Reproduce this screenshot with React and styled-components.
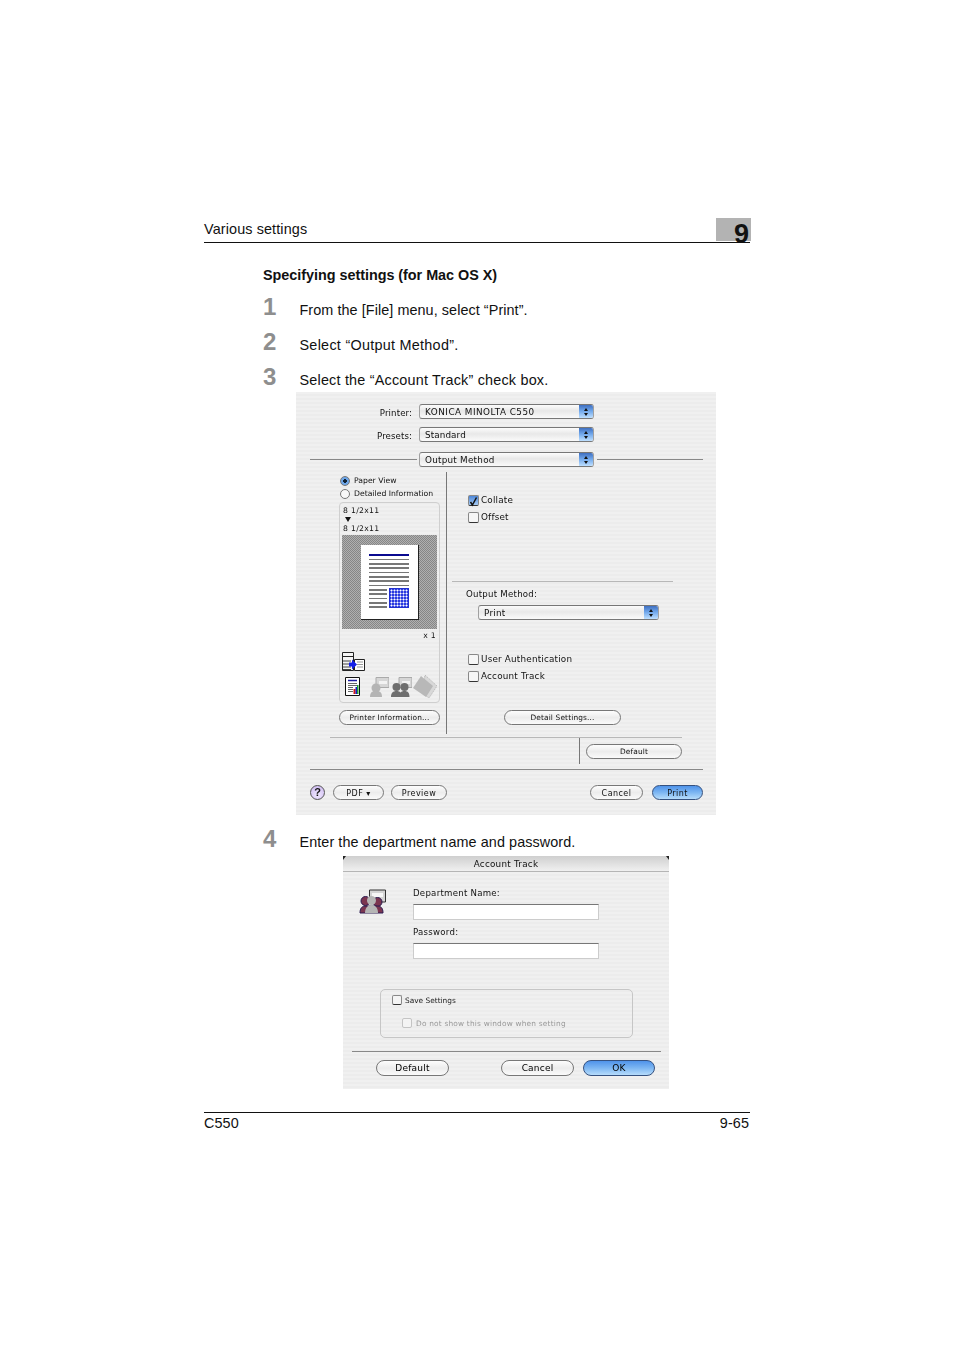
import styled, { createGlobalStyle } from "styled-components";

const GlobalStyle = createGlobalStyle`
    html, body {
        margin: 0;
        padding: 0;
        background: #fff;
    }
    body {
        font-family: "Liberation Sans", Arial, sans-serif;
        color: #111;
    }
`;

const Page = styled.div`
    width: 954px;
    height: 1350px;
    padding: 218px 204px 0;
    box-sizing: border-box;
    overflow: hidden;
`;
const Sheet = styled.div`
    width: 546px;
`;
const Header = styled.div`
    height: 24px;
    display: flex;
    justify-content: space-between;
    border-bottom: 1px solid #111;
`;
const HeaderTitle = styled.span`
    font-size: 14.4px;
    line-height: 22px;
    letter-spacing: 0.12px;
`;
const ChapterTab = styled.div`
    width: 35px;
    height: 23px;
    margin-right: -1px;
    background: #b3b3b3;
    text-align: right;
    font-size: 27px;
    font-weight: 700;
    line-height: 33px;
    padding-right: 2px;
    box-sizing: border-box;
`;
const Heading = styled.h2`
    margin: 22px 0 15px 59px;
    font-size: 14.4px;
    line-height: 20px;
    font-weight: 700;
    letter-spacing: -0.03px;
`;
const Step = styled.div`
    display: flex;
    height: 20px;
    margin: ${(p) => p.$top || 15}px 0 0 59px;
    font-size: 14.4px;
    line-height: 20px;
    letter-spacing: ${(p) => p.$track || 0}px;
`;
const StepNumber = styled.span`
    width: 36.5px;
    margin-top: -3px;
    font-size: 24px;
    font-weight: 700;
    color: #8e8e8e;
    letter-spacing: 0;
`;
const Striped = styled.div`
    font-family: "DejaVu Sans", sans-serif;
    font-size: 8.6px;
    color: #111;
    background: repeating-linear-gradient(#f0f0f0 0 2px, #ececec 2px 4px);
    box-sizing: border-box;
    filter: blur(0.4px);
`;
const PrintDialog = styled(Striped)`
    width: 420px;
    height: 423px;
    margin: 2px 0 0 92px;
    padding-top: 12px;
`;
const PopupRow = styled.div`
    display: flex;
    align-items: center;
    height: 15px;
    margin-bottom: 8px;
`;
const PopupLabel = styled.span`
    width: 116px;
    margin-right: 7px;
    padding-top: 2px;
    text-align: right;
    letter-spacing: 0.1px;
`;
const OutputRow = styled(PopupRow)`
    margin: 10px 0 0 14px;
`;
const SideRule = styled.div`
    height: 1px;
    width: ${(p) => p.$w}px;
    margin: ${(p) => p.$m};
    background: #888;
`;
const Popup = styled.div`
    display: flex;
    width: ${(p) => p.$w}px;
    height: 15px;
    margin: ${(p) => p.$top || 0}px 0 0 ${(p) => p.$left || 0}px;
    box-sizing: border-box;
    border: 1px solid #a0a0a0;
    border-top-color: #777;
    border-bottom-color: #777;
    border-radius: 3px;
    background: linear-gradient(#fcfcfc, #e8e8e8 45%, #fafafa);
    line-height: 14px;
    overflow: hidden;
`;
const PopupText = styled.span`
    flex: 1;
    padding-left: 5px;
    font-size: 8.8px;
    letter-spacing: ${(p) => p.$track || 0.25}px;
`;
const PopupArrows = styled.span`
    width: 14px;
    display: flex;
    flex-direction: column;
    align-items: center;
    justify-content: center;
    gap: 2px;
    background: linear-gradient(#3f6fc0, #6fa6ea 45%, #bfe0ff);
    &::before, &::after {
        content: "";
        border-left: 2.5px solid transparent;
        border-right: 2.5px solid transparent;
    }
    &::before { border-bottom: 3px solid #111; }
    &::after { border-top: 3px solid #111; }
`;
const Main = styled.div`
    display: flex;
    height: 262px;
    margin-top: 5px;
`;
const LeftColumn = styled.div`
    width: 151px;
    padding: 2px 0 0 43px;
    box-sizing: border-box;
    border-right: 1px solid #777;
`;
const RadioRow = styled.div`
    display: flex;
    align-items: center;
    height: 13px;
    margin-left: 1px;
    gap: 4px;
    font-size: 7.7px;
    line-height: 15px;
`;
const Radio = styled.span`
    width: 10px;
    height: 10px;
    box-sizing: border-box;
    border-radius: 50%;
    border: 1px solid #777;
    background: ${(p) => (p.$on ? "radial-gradient(circle, #123 0 1.6px, #6ea6e8 2px)" : "#f8f8f8")};
`;
const PreviewBox = styled.div`
    width: 101px;
    height: 201px;
    margin: 2px 0 7px;
    box-sizing: border-box;
    border: 1px solid #cfcfcf;
    border-radius: 4px;
    padding-top: 2px;
    font-size: 7.7px;
    letter-spacing: 0.3px;
`;
const SizeLine = styled.div`
    height: 10px;
    line-height: 12px;
    padding-left: 3px;
`;
const DownMark = styled.div`
    width: 0;
    height: 0;
    margin: 2px 0 1px 5px;
    border-left: 3px solid transparent;
    border-right: 3px solid transparent;
    border-top: 5px solid #111;
`;
const PreviewArea = styled.div`
    width: 95px;
    height: 94px;
    margin: 2px 0 0 2px;
    display: flex;
    align-items: center;
    justify-content: center;
    background: repeating-conic-gradient(#868686 0 25%, #b0b0b0 0 50%) 0 0 / 2px 2px;
`;
const Paper = styled.div`
    width: 58px;
    height: 75px;
    box-sizing: border-box;
    padding: 9px 0 0 8px;
    background: #fff;
    border-right: 1px solid #222;
    border-bottom: 1px solid #222;
`;
const BlueLine = styled.div`
    width: 40px;
    height: 2.5px;
    margin-bottom: 2.8px;
    background: #0a0a90;
`;
const TextLine = styled.div`
    width: ${(p) => p.$w}px;
    height: 1.6px;
    margin-bottom: 2.73px;
    background: #777;
`;
const PaperBottom = styled.div`
    display: flex;
    gap: 2px;
`;
const DotBox = styled.div`
    width: 20px;
    height: 20px;
    margin-top: -1px;
    box-sizing: border-box;
    border: 1px solid #2230d0;
    background: radial-gradient(circle, #fff 0.8px, #2a3ae0 1.2px) 0 0 / 3px 3px;
`;
const CopyCount = styled.div`
    height: 12px;
    line-height: 13px;
    padding-right: 3px;
    text-align: right;
`;
const IconRow = styled.div`
    display: flex;
    align-items: center;
    margin: ${(p) => p.$m};
`;
const IconGap = styled.span`
    width: ${(p) => p.$w}px;
`;
const PillButton = styled.div`
    width: ${(p) => p.$w}px;
    height: ${(p) => p.$h || 15}px;
    margin: ${(p) => p.$top || 0}px 0 0 ${(p) => p.$left || 0}px;
    box-sizing: border-box;
    border: 1px solid #777;
    border-radius: 9px;
    text-align: center;
    line-height: ${(p) => (p.$small ? 14 : 16)}px;
    font-size: ${(p) => (p.$small ? 7.4 : 8)}px;
    letter-spacing: ${(p) => (p.$small ? 0.15 : 0.45)}px;
    flex-shrink: 0;
    background: ${(p) =>
        p.$primary
            ? "linear-gradient(#4f93ea, #7db6f2 50%, #b6dcfb)"
            : "linear-gradient(#fdfdfd, #ececec 50%, #fafafa)"};
    border-color: ${(p) => (p.$primary ? "#35517f" : "#777")};
`;
const RightColumn = styled.div`
    flex: 1;
`;
const CheckRow = styled.div`
    display: flex;
    align-items: center;
    height: 12px;
    margin: ${(p) => p.$top}px 0 0 21px;
    gap: 2px;
    font-size: 8.8px;
    letter-spacing: 0.2px;
`;
const CheckBox = styled.span`
    width: 11px;
    height: 11px;
    box-sizing: border-box;
    border: 1px solid #888;
    border-bottom-color: #333;
    border-radius: 2px;
    background: ${(p) => (p.$on ? "linear-gradient(#4c86d8, #a8cdf5)" : "#f6f6f6")};
    display: flex;
    overflow: visible;
`;
const ThinRule = styled.div`
    height: 1px;
    width: ${(p) => p.$w}px;
    margin: ${(p) => p.$m};
    background: ${(p) => p.$c || "#b8b8b8"};
`;
const FieldLabel = styled.div`
    height: 12px;
    line-height: 12px;
    margin: ${(p) => p.$m};
    font-size: 8.6px;
    letter-spacing: 0.25px;
`;
const DefaultRow = styled.div`
    height: 26px;
    width: 103px;
    margin-left: 283px;
    padding: 6px 0 0 6px;
    box-sizing: border-box;
    border-left: 1px solid #777;
`;
const DialogFooter = styled.div`
    display: flex;
    align-items: center;
    height: 15px;
    margin-top: 15px;
    padding: 0 13px 0 14px;
`;
const HelpButton = styled.div`
    width: 15px;
    height: 15px;
    box-sizing: border-box;
    border: 1px solid #555;
    border-radius: 50%;
    background: radial-gradient(circle at 50% 70%, #f0e8ff, #c9b4ee);
    font-family: "Liberation Sans", sans-serif;
    font-size: 11px;
    font-weight: 700;
    line-height: 13px;
    text-align: center;
`;
const Grow = styled.div`
    flex: 1;
`;
const AccountDialog = styled(Striped)`
    width: 326px;
    height: 233px;
    margin: 4px 0 0 139px;
`;
const TitleBar = styled.div`
    position: relative;
    height: 16px;
    box-sizing: border-box;
    border-bottom: 1px solid #b5b5b5;
    background: linear-gradient(#cfcfcf, #f0f0f0);
    text-align: center;
    line-height: 16px;
    font-size: 8.8px;
    letter-spacing: 0.25px;
    &::before, &::after {
        content: "";
        position: absolute;
        top: 0;
        border-top: 4px solid #222;
    }
    &::before {
        left: 0;
        border-right: 3px solid transparent;
    }
    &::after {
        right: 0;
        border-left: 3px solid transparent;
    }
`;
const AccountBody = styled.div`
    display: flex;
    gap: 27px;
    padding: 15px 0 0 16px;
`;
const IconSlot = styled.div`
    width: 27px;
    padding-top: 2px;
`;
const TextInput = styled.div`
    width: 186px;
    height: 16px;
    margin-top: ${(p) => p.$top}px;
    box-sizing: border-box;
    background: #fff;
    border: 1px solid #ccc;
    border-top: 1px solid #777;
`;
const GroupBox = styled.div`
    width: 253px;
    height: 49px;
    margin: 30px 0 0 37px;
    box-sizing: border-box;
    border: 1px solid #c6c6c6;
    border-radius: 5px;
    padding-top: 5px;
    font-size: 7.4px;
`;
const SmallCheckRow = styled.div`
    display: flex;
    align-items: center;
    height: 10px;
    margin: ${(p) => p.$top}px 0 0 ${(p) => p.$left}px;
    gap: ${(p) => (p.$off ? 4 : 3)}px;
    color: ${(p) => (p.$off ? "#999" : "#222")};
    letter-spacing: ${(p) => (p.$off ? 0.2 : 0)}px;
`;
const SmallBox = styled.span`
    width: 10px;
    height: 10px;
    box-sizing: border-box;
    border: 1px solid ${(p) => (p.$off ? "#c4c4c4" : "#888")};
    border-bottom-color: ${(p) => (p.$off ? "#c4c4c4" : "#333")};
    border-radius: 2px;
    background: #f4f4f4;
`;
const AccountButtons = styled.div`
    display: flex;
    margin-top: 8px;
    padding-left: 33px;
`;
const DialogButton = styled(PillButton)`
    font-size: 9px;
    letter-spacing: 0.2px;
    line-height: 14px;
    color: #000;
`;
const PageFooter = styled.div`
    display: flex;
    justify-content: space-between;
    margin-top: 23px;
    padding-right: 1px;
    border-top: 1px solid #111;
    font-size: 14.4px;
    line-height: 20px;
    letter-spacing: 0.1px;
`;

function TransferIcon() {
    return (
        <svg width="23" height="19" viewBox="0 0 23 19">
            <path d="M.5.5h11v18H.5z" fill="#f4f4f4" stroke="#222" />
            <path d="M1 4.500h10" stroke="#222" />
            <path d="M1 9h8M1 12h8M1 15h8M1 17.500h8" stroke="#444" />
            <path d="M12.500 7.500h10v11h-10z" fill="#fff" stroke="#222" />
            <path d="M15 10h6M15 12.500h6M15 15h6" stroke="#999" />
            <path d="M7 10.500h3V7.500l5 5-5 5v-3H7z" fill="#1420e8" />
        </svg>
    );
}

function ReportIcon() {
    return (
        <svg width="15" height="19" viewBox="0 0 15 19">
            <path d="M.5.5h14v18H.5z" fill="#fff" stroke="#111" />
            <path d="M3 3.500h9" stroke="#1a1aa0" strokeWidth="1.500" />
            <path d="M3 6.500h9M3 8.500h9M3 10.500h5M3 12.500h5M3 14.500h5" stroke="#666" />
            <path d="M8.500 12h2v5h-2z" fill="#d01818" />
            <path d="M10.500 10h1.500v7h-1.500z" fill="#1818c0" />
            <path d="M12 8h1.500v9H12z" fill="#18a030" />
        </svg>
    );
}

function PersonIcon() {
    return (
        <svg width="19" height="20" viewBox="0 0 19 20">
            <path d="M6 .5h13v10H6z" fill="#d6d6d6" stroke="#aaa" />
            <path d="M9 4h8v3H9z" fill="#f2f2f2" />
            <circle cx="6" cy="11" r="4.500" fill="#b4b4b4" />
            <path d="M0 20c0-4.500 2-6 6-6s6 1.500 6 6z" fill="#b4b4b4" />
        </svg>
    );
}

function GroupIcon() {
    return (
        <svg width="21" height="20" viewBox="0 0 21 20">
            <path d="M8 .5h13v10H8z" fill="#d6d6d6" stroke="#aaa" />
            <path d="M11 4h8v3h-8z" fill="#f2f2f2" />
            <circle cx="5.500" cy="10" r="4" fill="#6e6e6e" />
            <circle cx="13.500" cy="10" r="4" fill="#6e6e6e" />
            <path d="M0 20c0-4 2-6 5.500-6 2 0 3 .5 4 1.500 1-1 2-1.500 4-1.500 3.500 0 5 2 5 6z" fill="#6e6e6e" />
        </svg>
    );
}

function StackIcon() {
    return (
        <svg width="24" height="23" viewBox="0 0 24 23">
            <path d="M12 0l12 11-8 12L9 18z" fill="#d8d8d8" stroke="#bbb" strokeDasharray="1.500 1" />
            <path d="M8 1l12 10-7 11L0 13z" fill="#b8b8b8" />
        </svg>
    );
}

function AccountIcon() {
    return (
        <svg width="27" height="25" viewBox="0 0 27 25">
            <path d="M10.500 1h16v12h-16z" fill="#d4d4d4" stroke="#333" />
            <path d="M13 4h11v4H13z" fill="#f6f6f6" />
            <circle cx="6.500" cy="12" r="4.500" fill="#7b3550" stroke="#2a1a50" />
            <circle cx="18.500" cy="13" r="4.500" fill="#7b3550" stroke="#2a1a50" />
            <path d="M1 24c0-5 2-7 6-7h11c4 0 6 2 6 7z" fill="#7b3550" stroke="#2a1a50" />
            <circle cx="12.500" cy="11.500" r="4.500" fill="#b5b5b5" />
            <path d="M6 24c0-5 2.500-8 6.500-8s6.500 3 6.500 8z" fill="#b5b5b5" />
        </svg>
    );
}

function CheckMark() {
    return (
        <svg width="12" height="12" viewBox="0 0 12 12">
            <path d="M2 5l2.500 4L10-1" fill="none" stroke="#111" strokeWidth="2" transform="translate(0 1)" />
        </svg>
    );
}

function PopupField({ text, width, left, top, track }) {
    return (
        <Popup $w={width} $left={left} $top={top}>
            <PopupText $track={track}>{text}</PopupText>
            <PopupArrows />
        </Popup>
    );
}

const fullLines = [0, 1, 2, 3, 4, 5, 6];
const shortLines = [0, 1, 2, 3, 4];

function App() {
    return (
        <Page>
            <GlobalStyle />
            <Sheet>
                <Header>
                    <HeaderTitle>Various settings</HeaderTitle>
                    <ChapterTab>9</ChapterTab>
                </Header>
                <Heading>Specifying settings (for Mac OS X)</Heading>
                <Step $track={0.07}><StepNumber>1</StepNumber>From the [File] menu, select “Print”.</Step>
                <Step $track={0.27}><StepNumber>2</StepNumber>Select “Output Method”.</Step>
                <Step $track={0.2}><StepNumber>3</StepNumber>Select the “Account Track” check box.</Step>

                <PrintDialog>
                    <PopupRow>
                        <PopupLabel>Printer:</PopupLabel>
                        <PopupField text="KONICA MINOLTA C550" width={175} track={0.5} />
                    </PopupRow>
                    <PopupRow>
                        <PopupLabel>Presets:</PopupLabel>
                        <PopupField text="Standard" width={175} track={0.1} />
                    </PopupRow>
                    <OutputRow>
                        <SideRule $w={107} $m="0 2px 0 0" />
                        <PopupField text="Output Method" width={175} />
                        <SideRule $w={106} $m="0 0 0 3px" />
                    </OutputRow>
                    <Main>
                        <LeftColumn>
                            <RadioRow><Radio $on />Paper View</RadioRow>
                            <RadioRow><Radio />Detailed Information</RadioRow>
                            <PreviewBox>
                                <SizeLine>8 1/2x11</SizeLine>
                                <DownMark />
                                <SizeLine>8 1/2x11</SizeLine>
                                <PreviewArea>
                                    <Paper>
                                        <BlueLine />
                                        {fullLines.map((n) => <TextLine key={n} $w={40} />)}
                                        <PaperBottom>
                                            <div>
                                                {shortLines.map((n) => <TextLine key={n} $w={18} />)}
                                            </div>
                                            <DotBox />
                                        </PaperBottom>
                                    </Paper>
                                </PreviewArea>
                                <CopyCount>x 1</CopyCount>
                                <IconRow $m="11px 0 0 2px"><TransferIcon /></IconRow>
                                <IconRow $m="4px 0 0 5px">
                                    <ReportIcon />
                                    <IconGap $w={10} />
                                    <PersonIcon />
                                    <IconGap $w={2} />
                                    <GroupIcon />
                                    <IconGap $w={1} />
                                    <StackIcon />
                                </IconRow>
                            </PreviewBox>
                            <PillButton $w={101} $small>Printer Information...</PillButton>
                        </LeftColumn>
                        <RightColumn>
                            <CheckRow $top={22}><CheckBox $on><CheckMark /></CheckBox>Collate</CheckRow>
                            <CheckRow $top={5}><CheckBox />Offset</CheckRow>
                            <ThinRule $w={221} $m="58px 0 0 5px" />
                            <FieldLabel $m="6px 0 0 19px">Output Method:</FieldLabel>
                            <PopupField text="Print" width={181} left={31} top={5} />
                            <CheckRow $top={33}><CheckBox />User Authentication</CheckRow>
                            <CheckRow $top={5}><CheckBox />Account Track</CheckRow>
                            <PillButton $w={117} $left={57} $top={28} $small>Detail Settings...</PillButton>
                        </RightColumn>
                    </Main>
                    <ThinRule $w={352} $m="3px 0 0 34px" />
                    <DefaultRow><PillButton $w={96} $small>Default</PillButton></DefaultRow>
                    <ThinRule $w={393} $m="5px 0 0 14px" $c="#888" />
                    <DialogFooter>
                        <HelpButton>?</HelpButton>
                        <PillButton $w={51} $left={8}>PDF ▾</PillButton>
                        <PillButton $w={56} $left={7}>Preview</PillButton>
                        <Grow />
                        <PillButton $w={53}>Cancel</PillButton>
                        <PillButton $w={51} $left={9} $primary>Print</PillButton>
                    </DialogFooter>
                </PrintDialog>

                <Step $top={17} $track={0.08}><StepNumber>4</StepNumber>Enter the department name and password.</Step>

                <AccountDialog>
                    <TitleBar>Account Track</TitleBar>
                    <AccountBody>
                        <IconSlot><AccountIcon /></IconSlot>
                        <div>
                            <FieldLabel $m="0">Department Name:</FieldLabel>
                            <TextInput $top={5} />
                            <FieldLabel $m="6px 0 0">Password:</FieldLabel>
                            <TextInput $top={5} />
                        </div>
                    </AccountBody>
                    <GroupBox>
                        <SmallCheckRow $top={0} $left={11}><SmallBox />Save Settings</SmallCheckRow>
                        <SmallCheckRow $top={13} $left={21} $off><SmallBox $off />Do not show this window when setting</SmallCheckRow>
                    </GroupBox>
                    <ThinRule $w={309} $m="13px 0 0 9px" $c="#888" />
                    <AccountButtons>
                        <DialogButton $w={73} $h={16}>Default</DialogButton>
                        <DialogButton $w={73} $h={16} $left={52}>Cancel</DialogButton>
                        <DialogButton $w={72} $h={16} $left={9} $primary>OK</DialogButton>
                    </AccountButtons>
                </AccountDialog>

                <PageFooter>
                    <span>C550</span>
                    <span>9-65</span>
                </PageFooter>
            </Sheet>
        </Page>
    );
}

export default App;
